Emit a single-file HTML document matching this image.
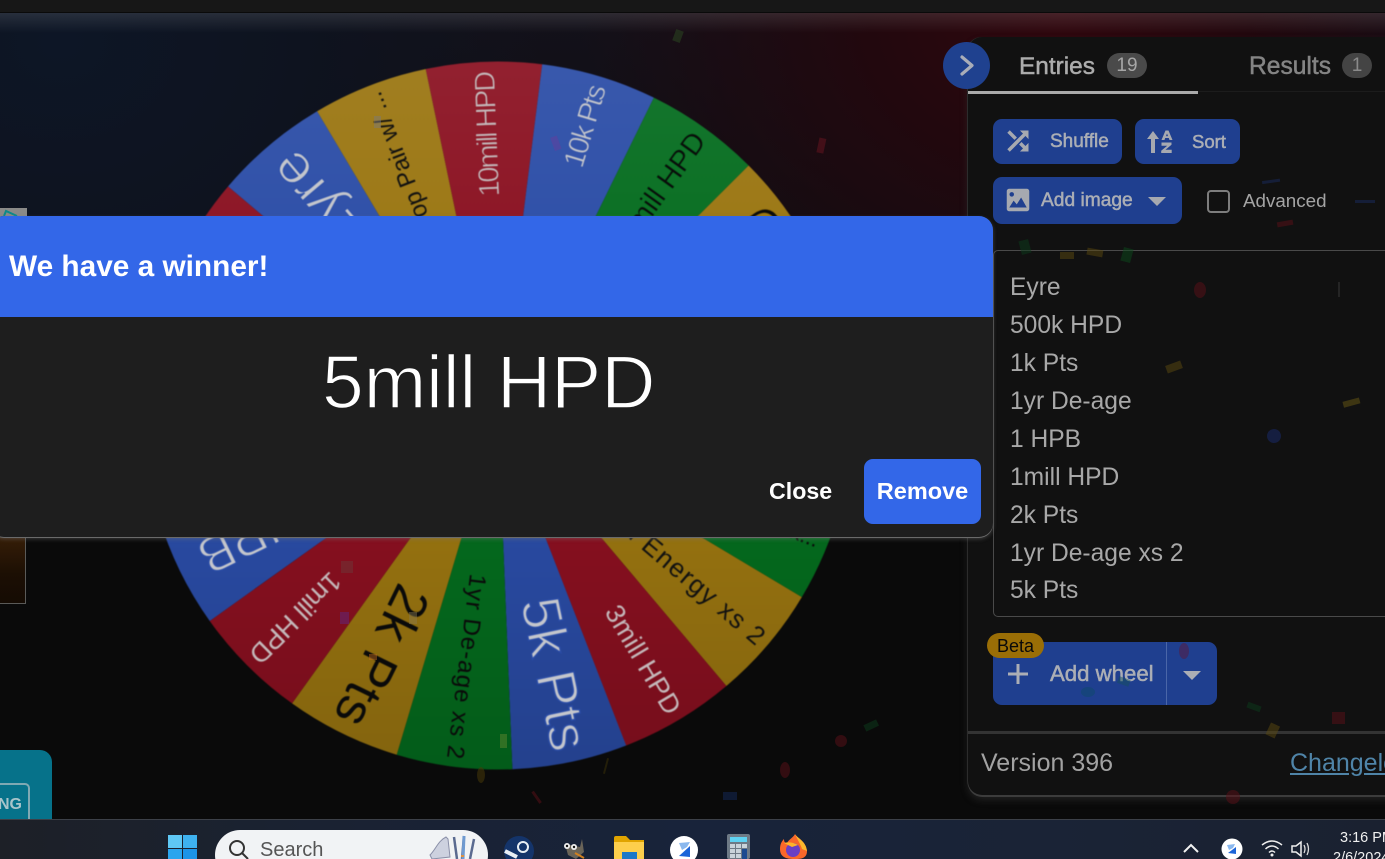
<!DOCTYPE html>
<html><head><meta charset="utf-8"><title>Winner</title>
<style>
html,body{margin:0;padding:0;background:#0a0a0a}
#r{position:relative;width:1385px;height:859px;overflow:hidden;font-family:"Liberation Sans",sans-serif;background:#0a0a0a}
.a{position:absolute}
.t{position:absolute;white-space:nowrap;line-height:1}
.btn{position:absolute;background:#1f3f8f;border-radius:9px}
.m{-webkit-text-stroke:.5px currentColor}
.row{position:absolute;left:1010px;font-size:24.6px;line-height:1;color:#a8a8a8;white-space:nowrap}
</style></head><body><div id="r">
<div class="a" style="left:0;top:13px;width:1385px;height:806px;background:radial-gradient(ellipse 480px 380px at 1060px 0,#30070e 0,#22080e 40%,rgba(20,8,12,0) 100%),radial-gradient(ellipse 480px 400px at 60px 30px,#0d1626 0,#0e131f 50%,rgba(10,10,10,0) 100%),linear-gradient(#13111a 0,#0a0a0a 55%)"></div>
<div class="a" style="left:0;top:13px;width:1385px;height:20px;background:linear-gradient(rgba(255,255,255,.11),rgba(255,255,255,0))"></div>
<div class="a" style="left:0;top:0;width:1385px;height:12px;background:#171717"></div>

<svg class="a" style="left:0;top:0" width="1385" height="859" viewBox="0 0 1385 859">
<defs><linearGradient id="sh" x1="0" y1="0" x2="0" y2="1"><stop offset="0" stop-color="#fff" stop-opacity=".07"/><stop offset=".3" stop-color="#fff" stop-opacity=".02"/><stop offset=".55" stop-color="#000" stop-opacity="0"/><stop offset="1" stop-color="#000" stop-opacity=".15"/></linearGradient></defs>
<g style="filter:blur(.6px)">
<g transform="translate(498 415.5)" font-family="'Liberation Sans',sans-serif" text-anchor="end">
<path transform="rotate(78.2)" fill="#2a4ca6" d="M0 0L349.17 -58.27A354 354 0 0 1 349.17 58.27Z"/>
<path transform="rotate(97.15)" fill="#046c1e" d="M0 0L349.17 -58.27A354 354 0 0 1 349.17 58.27Z"/>
<path transform="rotate(116.1)" fill="#9a7510" d="M0 0L349.17 -58.27A354 354 0 0 1 349.17 58.27Z"/>
<path transform="rotate(135.05)" fill="#8a1020" d="M0 0L349.17 -58.27A354 354 0 0 1 349.17 58.27Z"/>
<path transform="rotate(154)" fill="#2a4ca6" d="M0 0L349.17 -58.27A354 354 0 0 1 349.17 58.27Z"/>
<path transform="rotate(172.95)" fill="#046c1e" d="M0 0L349.17 -58.27A354 354 0 0 1 349.17 58.27Z"/>
<path transform="rotate(191.9)" fill="#9a7510" d="M0 0L349.17 -58.27A354 354 0 0 1 349.17 58.27Z"/>
<path transform="rotate(210.85)" fill="#8a1020" d="M0 0L349.17 -58.27A354 354 0 0 1 349.17 58.27Z"/>
<path transform="rotate(229.8)" fill="#2a4ca6" d="M0 0L349.17 -58.27A354 354 0 0 1 349.17 58.27Z"/>
<path transform="rotate(248.75)" fill="#9a7510" d="M0 0L349.17 -58.27A354 354 0 0 1 349.17 58.27Z"/>
<path transform="rotate(267.7)" fill="#8a1020" d="M0 0L349.17 -58.27A354 354 0 0 1 349.17 58.27Z"/>
<path transform="rotate(286.65)" fill="#2a4ca6" d="M0 0L349.17 -58.27A354 354 0 0 1 349.17 58.27Z"/>
<path transform="rotate(305.6)" fill="#046c1e" d="M0 0L349.17 -58.27A354 354 0 0 1 349.17 58.27Z"/>
<path transform="rotate(324.55)" fill="#9a7510" d="M0 0L349.17 -58.27A354 354 0 0 1 349.17 58.27Z"/>
<path transform="rotate(343.5)" fill="#8a1020" d="M0 0L349.17 -58.27A354 354 0 0 1 349.17 58.27Z"/>
<path transform="rotate(2.45)" fill="#2a4ca6" d="M0 0L349.17 -58.27A354 354 0 0 1 349.17 58.27Z"/>
<path transform="rotate(21.4)" fill="#046c1e" d="M0 0L349.17 -58.27A354 354 0 0 1 349.17 58.27Z"/>
<path transform="rotate(40.35)" fill="#9a7510" d="M0 0L349.17 -58.27A354 354 0 0 1 349.17 58.27Z"/>
<path transform="rotate(59.3)" fill="#8a1020" d="M0 0L349.17 -58.27A354 354 0 0 1 349.17 58.27Z"/>
<circle r="354" fill="url(#sh)"/>
<text transform="rotate(78.2)" x="342" y="16" font-size="55" fill="#c4c6cc" stroke="#2a4ca6" stroke-width="1.4" textLength="155">5k Pts</text>
<text transform="rotate(97.15)" x="346" y="8" font-size="24" fill="#0a0a0a" textLength="186">1yr De-age xs 2</text>
<text transform="rotate(116.1)" x="342" y="16" font-size="52" fill="#0a0a0a" textLength="150">2k Pts</text>
<text transform="rotate(135.05)" x="345" y="9" font-size="27" fill="#c4b8ba" textLength="117">1mill HPD</text>
<text transform="rotate(154)" x="330" y="18" font-size="52" fill="#c4c6cc" stroke="#2a4ca6" stroke-width="1.4">1 HPB</text>
<text transform="rotate(172.95)" x="345" y="9" font-size="26" fill="#0a0a0a">1yr De-age</text>
<text transform="rotate(191.9)" x="345" y="14" font-size="40" fill="#0a0a0a">1k Pts</text>
<text transform="rotate(210.85)" x="345" y="10" font-size="28" fill="#c4b8ba">500k HPD</text>
<text transform="rotate(229.8)" x="336" y="19" font-size="56" fill="#c4c6cc" stroke="#2f51a9" stroke-width="1.4">Eyre</text>
<text transform="rotate(248.75)" x="346" y="8" font-size="24" fill="#111">Top Pair w/ ...</text>
<text transform="rotate(267.7)" x="345" y="10" font-size="29" fill="#c4b8ba" stroke="#8a1020" stroke-width=".5" textLength="126">10mill HPD</text>
<text transform="rotate(286.65)" x="345" y="10" font-size="29" fill="#c4c6cc" stroke="#2a4ca6" stroke-width=".5" textLength="85">10k Pts</text>
<text transform="rotate(305.6)" x="345" y="10" font-size="29" fill="#0a0a0a" stroke="#046c1e" stroke-width=".5">5mill HPD</text>
<text transform="rotate(324.55)" x="346" y="18" font-size="50" fill="#0a0a0a" stroke="#9a7510" stroke-width="1">1 HPD</text>
<text transform="rotate(59.3)" x="345" y="9" font-size="27" fill="#c4b8ba" textLength="122">3mill HPD</text>
<text transform="rotate(40.35)" x="346" y="9" font-size="26" fill="#111" textLength="225">Titan Energy xs 2</text>
<text transform="rotate(21.4)" x="344" y="7" font-size="22" fill="#0a0a0a">Stack...</text>
</g></g>
</svg>

<!-- left fragments -->
<div class="a" style="left:0;top:208px;width:27px;height:10px;background:#8a8a88"></div>
<svg class="a" style="left:0;top:208px" width="27" height="10"><path d="M4 8L6 3L17 8" fill="none" stroke="#0c8a8a" stroke-width="2"/></svg>
<div class="a" style="left:0;top:530px;width:25px;height:72px;background:linear-gradient(#3a2008,#1c0f04 60%,#150b03);border:1px solid #5a5a58;border-left:0"></div>
<div class="a" style="left:0;top:750px;width:52px;height:70px;background:#06728a;border-radius:0 12px 0 0"></div>
<div class="a" style="left:-30px;top:783px;width:60px;height:50px;border:2px solid #7fa9b3;border-radius:5px;box-sizing:border-box"></div>
<div class="t" style="left:-2px;top:797px;font-size:16px;font-weight:bold;color:#a8c4ca">NG</div>

<!-- panel -->
<div class="a" style="left:968px;top:37px;width:430px;height:758px;background:#111;border-radius:14px 0 0 14px;box-shadow:0 2px 0 #3c3c3c,-1px 0 0 #2c2c2c,0 5px 8px rgba(60,60,60,.45)"></div>
<div class="a" style="left:968px;top:91px;width:417px;height:1px;background:#1c1c1c"></div>
<div class="a" style="left:968px;top:91px;width:230px;height:3px;background:#aaa"></div>
<div class="a" style="left:943px;top:42px;width:47px;height:47px;border-radius:50%;background:#1f418f"></div>
<svg class="a" style="left:955px;top:52px" width="24" height="27"><path d="M7 5L17 13.5L7 22" fill="none" stroke="#a9adb8" stroke-width="3.2" stroke-linecap="round" stroke-linejoin="round"/></svg>
<div class="t m" style="left:1019px;top:55px;font-size:24.4px;color:#acacac">Entries</div>
<div class="a" style="left:1107px;top:53px;width:40px;height:25px;border-radius:13px;background:#4a4a4a"></div>
<div class="t" style="left:1107px;top:56px;width:40px;text-align:center;font-size:19px;color:#a6a6a6">19</div>
<div class="t m" style="left:1249px;top:55px;font-size:24.6px;color:#848484">Results</div>
<div class="a" style="left:1342px;top:53px;width:30px;height:25px;border-radius:13px;background:#444"></div>
<div class="t" style="left:1342px;top:56px;width:30px;text-align:center;font-size:19px;color:#8a8a8a">1</div>

<div class="btn" style="left:993px;top:119px;width:129px;height:45px"></div>
<svg class="a" style="left:1003px;top:126px" width="30" height="30" viewBox="0 0 24 24"><path fill="#a6a9b0" stroke="#a6a9b0" stroke-width=".8" d="M10.59 9.17L5.41 4 4 5.41l5.17 5.17 1.42-1.41zM14.5 4l2.04 2.04L4 18.59 5.41 20 17.96 7.46 20 9.5V4h-5.5zm.33 9.41l-1.41 1.41 3.13 3.13L14.5 20H20v-5.5l-2.04 2.04-3.13-3.13z"/></svg>
<div class="t m" style="left:1050px;top:132px;font-size:19px;color:#abaeb5">Shuffle</div>
<div class="btn" style="left:1135px;top:119px;width:105px;height:45px"></div>
<svg class="a" style="left:1146px;top:128px" width="28" height="28" viewBox="0 0 28 28"><path fill="#a6a9b0" d="M7 3L1 11h4v14h4V11h4z"/><path fill="#a6a9b0" d="M19.5 2.5h3l4 9.5h-3l-.7-2h-3.6l-.7 2h-3zm1.500 3l-1 2.600h2zM15.500 14.500h10v2.300l-6 5h6.200V25H15.200v-2.300l6-5h-5.700z"/></svg>
<div class="t m" style="left:1192px;top:133px;font-size:18.500px;color:#abaeb5">Sort</div>
<div class="btn" style="left:993px;top:177px;width:189px;height:47px"></div>
<svg class="a" style="left:1003px;top:185px" width="30" height="30" viewBox="0 0 24 24"><path fill="#a6a9b0" d="M21 19V5c0-1.100-.9-2-2-2H5c-1.100 0-2 .9-2 2v14c0 1.100.9 2 2 2h14c1.100 0 2-.9 2-2zM8.500 12.500l2.500 3.010L14.500 10l4.500 8H5l3.500-5.500z"/><circle cx="7" cy="7.500" r="1.800" fill="#1f3f8f"/></svg>
<div class="t m" style="left:1041px;top:191px;font-size:19.200px;color:#abaeb5">Add image</div>
<svg class="a" style="left:1148px;top:196px" width="18" height="11"><path d="M0 1H18L9 10Z" fill="#a6a9b0"/></svg>
<div class="a" style="left:1207px;top:190px;width:23px;height:23px;box-sizing:border-box;border:2.500px solid #7d7d7d;border-radius:4px"></div>
<div class="t" style="left:1243px;top:192px;font-size:18.800px;color:#a4a4a4">Advanced</div>

<div class="a" style="left:993px;top:250px;width:420px;height:367px;box-sizing:border-box;border:1px solid #4a4a4a;border-radius:5px"></div>
<div class="row" style="top:276px">Eyre</div>
<div class="row" style="top:314px">500k HPD</div>
<div class="row" style="top:352px">1k Pts</div>
<div class="row" style="top:390px">1yr De-age</div>
<div class="row" style="top:428px">1 HPB</div>
<div class="row" style="top:466px">1mill HPD</div>
<div class="row" style="top:504px">2k Pts</div>
<div class="row" style="top:542px">1yr De-age xs 2</div>
<div class="row" style="top:579px">5k Pts</div>

<div class="btn" style="left:993px;top:642px;width:224px;height:63px"></div>
<div class="a" style="left:1166px;top:642px;width:1px;height:63px;background:#4a66a8"></div>
<svg class="a" style="left:1007px;top:663px" width="22" height="22"><path d="M11 1V21M1 11H21" stroke="#abaeb5" stroke-width="3"/></svg>
<div class="t m" style="left:1050px;top:663px;font-size:22.200px;color:#abaeb5">Add wheel</div>
<svg class="a" style="left:1183px;top:670px" width="18" height="11"><path d="M0 1H18L9 10Z" fill="#abaeb5"/></svg>
<div class="a" style="left:987px;top:633px;width:57px;height:25px;border-radius:13px;background:#9a6e06"></div>
<div class="t" style="left:987px;top:637px;width:57px;text-align:center;font-size:18px;color:#0a0a0a">Beta</div>

<div class="a" style="left:968px;top:731px;width:417px;height:3px;background:#333"></div>
<div class="t" style="left:981px;top:751px;font-size:25px;color:#a2a2a2">Version 396</div>
<div class="t" style="left:1290px;top:751px;font-size:25px;color:#4f84a8;text-decoration:underline">Changelog</div>

<!-- confetti -->
<svg class="a" style="left:0;top:0" width="1385" height="859">
<g opacity=".5">
<rect x="674" y="30" width="8" height="12" fill="#2c4a22" transform="rotate(20 678 36)"/>
<rect x="818" y="138" width="7" height="15" fill="#6a1420" transform="rotate(12 821 145)"/>
<ellipse cx="1200" cy="290" rx="6" ry="8" fill="#5c1018"/>
<rect x="1087" y="249" width="16" height="7" fill="#5c4a10" transform="rotate(10 1095 252)"/>
<rect x="1122" y="248" width="10" height="14" fill="#0c4a1c" transform="rotate(15 1127 255)"/>
<rect x="1020" y="240" width="10" height="14" fill="#0c3c1c" transform="rotate(-15 1025 247)"/>
<rect x="1060" y="252" width="14" height="7" fill="#5c4a10"/>
<rect x="1166" y="363" width="16" height="8" fill="#5c4a10" transform="rotate(-20 1174 367)"/>
<rect x="1343" y="400" width="17" height="6" fill="#6a5a14" transform="rotate(-15 1350 403)"/>
<circle cx="1274" cy="436" r="7" fill="#1a2c70"/>
<rect x="1338" y="282" width="2" height="15" fill="#3a3a3a"/>
<rect x="1262" y="180" width="18" height="3" fill="#1a2c60" transform="rotate(-8 1270 181)"/>
<rect x="1277" y="221" width="16" height="5" fill="#5c1018" transform="rotate(-10 1285 223)"/>
<rect x="1355" y="200" width="20" height="3" fill="#1a2c60"/>
<ellipse cx="1184" cy="651" rx="5" ry="8" fill="#5c1838"/>
<ellipse cx="1088" cy="692" rx="7" ry="5" fill="#0e4a68"/>
<rect x="1118" y="678" width="12" height="7" fill="#16505c" transform="rotate(20 1124 681)"/>
<rect x="1247" y="704" width="14" height="6" fill="#0c3c1c" transform="rotate(20 1254 707)"/>
<rect x="1332" y="712" width="13" height="12" fill="#5c1018"/>
<rect x="1268" y="724" width="10" height="13" fill="#5c4a10" transform="rotate(25 1273 730)"/>
<circle cx="1233" cy="797" r="7" fill="#5c1018"/>
<ellipse cx="785" cy="770" rx="5" ry="8" fill="#5c1018"/>
<circle cx="841" cy="741" r="6" fill="#5c1018"/>
<rect x="864" y="722" width="14" height="7" fill="#0c3c1c" transform="rotate(-25 871 725)"/>
<rect x="723" y="792" width="14" height="8" fill="#142a5c"/>
<ellipse cx="481" cy="775" rx="4" ry="8" fill="#4c3c08"/>
<rect x="535" y="790" width="3" height="14" fill="#5c1018" transform="rotate(-35 537 797)"/>
<rect x="605" y="758" width="2" height="16" fill="#3c3208" transform="rotate(15 606 766)"/>
</g>
<g opacity=".45">
<rect x="553" y="136" width="7" height="14" fill="#6a3c9c" transform="rotate(-20 557 145)"/>
<rect x="374" y="116" width="7" height="12" fill="#7a7a80"/>
<rect x="341" y="561" width="12" height="12" fill="#6a3c3c"/>
<rect x="340" y="612" width="9" height="12" fill="#5c2c8c"/>
<rect x="409" y="612" width="8" height="12" fill="#8a7a50"/>
<rect x="369" y="654" width="8" height="6" fill="#c06a20"/>
<rect x="500" y="734" width="7" height="14" fill="#6a8a30"/>
</g>
</svg>

<!-- dialog -->
<div class="a" style="left:-10px;top:216px;width:1003px;height:321px;background:#1e1e1e;border-radius:14px;box-shadow:0 1px 0 #6a6a6a,0 2px 4px rgba(120,120,120,.45);overflow:hidden">
<div style="height:101px;background:#3367e8"></div>
</div>
<div class="t" style="left:9px;top:252px;font-size:29.800px;font-weight:bold;color:#fff">We have a winner!</div>
<div class="t" style="left:322px;top:345px;font-size:75px;color:#fff;-webkit-text-stroke:1.4px #1e1e1e">5mill HPD</div>
<div class="t" style="left:769px;top:480px;font-size:23.200px;font-weight:bold;color:#fff">Close</div>
<div class="a" style="left:864px;top:459px;width:117px;height:65px;background:#3367e8;border-radius:9px"></div>
<div class="t" style="left:864px;top:480px;width:117px;text-align:center;font-size:23.500px;font-weight:bold;color:#fff">Remove</div>

<!-- taskbar -->
<div class="a" style="left:0;top:819px;width:1385px;height:40px;background:linear-gradient(90deg,#1d2027 0,#1a2231 20%,#18233a 50%,#1a2335 80%,#1a2130 100%);border-top:1px solid #3c4048;box-sizing:border-box"></div>
<svg class="a" style="left:168px;top:835px" width="30" height="24"><rect x="0" y="0" width="14" height="13" fill="#5fc8f5"/><rect x="15" y="0" width="14" height="13" fill="#3eb2f0"/><rect x="0" y="14" width="14" height="13" fill="#2aa5ee"/><rect x="15" y="14" width="14" height="13" fill="#1c94e8"/></svg>
<div class="a" style="left:215px;top:830px;width:273px;height:50px;border-radius:25px;background:#f1f3f5"></div>
<svg class="a" style="left:228px;top:838px" width="22" height="21"><circle cx="9" cy="10" r="7" fill="none" stroke="#333" stroke-width="2"/><path d="M14 15L20 21" stroke="#333" stroke-width="2"/></svg>
<div class="t" style="left:260px;top:840px;font-size:20px;color:#555">Search</div>
<svg class="a" style="left:428px;top:835px" width="56" height="24"><path d="M2 20C8 14 10 6 18 2L20 4L22 22L4 24Z" fill="#cdd1df" stroke="#8a8fa8"/><path d="M26 2L29 24M36 1L34 24M46 4L42 24" stroke="#5a6a90" stroke-width="2.500"/><path d="M36 1L35 24" stroke="#6f9ad0" stroke-width="3"/><path d="M33 21L36 21" stroke="#e09040" stroke-width="2"/></svg>
<svg class="a" style="left:503px;top:835px" width="32" height="24"><circle cx="16" cy="16" r="15" fill="#14346a"/><circle cx="20" cy="12" r="5" fill="none" stroke="#e8eef4" stroke-width="2"/><path d="M2 16L14 22" stroke="#e8eef4" stroke-width="4"/></svg>
<svg class="a" style="left:558px;top:838px" width="30" height="21"><path d="M7 6L22 9L24 1L26 14L18 21L10 17Z" fill="#6a6458"/><circle cx="9" cy="8" r="3" fill="#eee"/><circle cx="16" cy="9" r="3" fill="#eee"/><circle cx="9" cy="8" r="1.200" fill="#111"/><circle cx="16" cy="9" r="1.200" fill="#111"/><path d="M17 15L26 20" stroke="#d08020" stroke-width="2"/></svg>
<svg class="a" style="left:614px;top:836px" width="31" height="23"><path d="M0 2Q0 0 2 0H12L16 4H30V23H0Z" fill="#e0a400"/><rect x="0" y="6" width="30" height="17" fill="#fdcf4c"/><rect x="8" y="16" width="15" height="7" fill="#1c78c8"/></svg>
<svg class="a" style="left:670px;top:835px" width="28" height="24"><circle cx="14" cy="15" r="14" fill="#fff"/><path d="M9 8L20 7L17 12L12 15Z" fill="#8ab8ee"/><path d="M20 11V22L9 21Z" fill="#1c64d8"/></svg>
<svg class="a" style="left:727px;top:834px" width="24" height="25"><rect x="0" y="0" width="23" height="25" rx="2" fill="#6e7a86"/><rect x="3" y="3" width="17" height="5" fill="#5fd2f2"/><g fill="#c9d3da"><rect x="3" y="10" width="5" height="4"/><rect x="9" y="10" width="5" height="4"/><rect x="15" y="10" width="5" height="4"/><rect x="3" y="15" width="5" height="4"/><rect x="9" y="15" width="5" height="4"/><rect x="3" y="20" width="5" height="4"/><rect x="9" y="20" width="5" height="4"/></g><rect x="15" y="15" width="5" height="10" fill="#1c4a90"/></svg>
<svg class="a" style="left:778px;top:833px" width="32" height="26"><path d="M17 1C19 5 28 8 29 18C29 26 22 26 16 26C8 26 2 24 2 16C2 11 4 8 6 6C6 9 7 10 9 10C11 6 15 5 17 1Z" fill="#f9672a"/><path d="M17 1C19 5 28 8 29 18L24 16C23 12 20 8 17 1Z" fill="#fdb72c"/><circle cx="15" cy="17" r="7" fill="#6a3fc4"/><path d="M6 10C10 9 15 9 20 12L14 14Z" fill="#ffb42a"/></svg>
<svg class="a" style="left:1183px;top:843px" width="16" height="10"><path d="M1 9L8 2L15 9" fill="none" stroke="#f2f2f2" stroke-width="2"/></svg>
<svg class="a" style="left:1221px;top:838px" width="22" height="21"><circle cx="11" cy="11" r="10.500" fill="#fff"/><path d="M6 7L14 6L12 10L8 12Z" fill="#8ab8ee"/><path d="M15 9V16L7 15Z" fill="#1c64d8"/></svg>
<svg class="a" style="left:1261px;top:839px" width="22" height="18"><path d="M1 6Q11 -2 21 6M4.500 10Q11 4 17.500 10M8 13.500Q11 10.500 14 13.500" fill="none" stroke="#eee" stroke-width="1.500"/><circle cx="11" cy="16" r="1.500" fill="#eee"/></svg>
<svg class="a" style="left:1291px;top:840px" width="20" height="18"><path d="M1 6H5L10 2V16L5 12H1Z" fill="none" stroke="#eee" stroke-width="1.500"/><path d="M13 5Q15 9 13 13M16 3Q19 9 16 15" fill="none" stroke="#ddd" stroke-width="1.300"/></svg>
<div class="t" style="left:1340px;top:831px;font-size:14.500px;color:#f0f0f0">3:16 PM</div>
<div class="t" style="left:1333px;top:851px;font-size:14.500px;color:#f0f0f0">2/6/2024</div>
</div></body></html>
